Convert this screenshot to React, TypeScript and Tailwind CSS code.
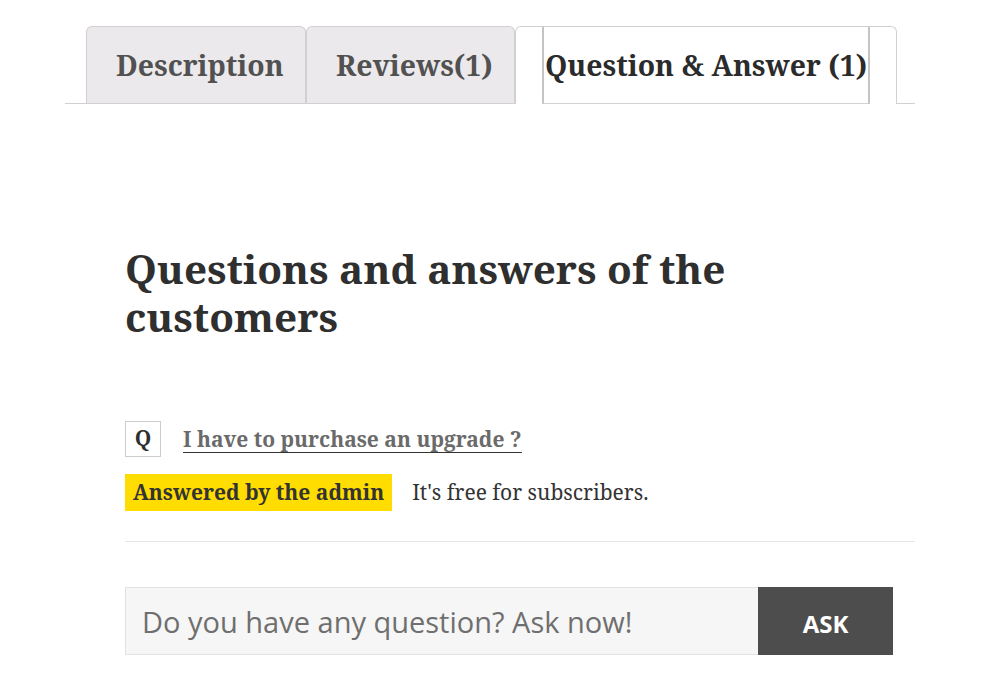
const serif = { fontFamily: '"Noto Serif", "DejaVu Serif", serif' };

const tabs = [
  { label: "Description", active: false, w: "w-[220px]" },
  { label: "Reviews(1)", active: false, w: "w-[209px]" },
  { label: "Question & Answer (1)", active: true, w: "w-[382px]" },
];

export default function App() {
  return (
    <div className="w-[997px] h-[678px] bg-white overflow-hidden" style={serif}>
      <div className="ml-[65px] w-[850px]">
        {/* tabs */}
        <ul className="flex pl-[21px] pt-[26px] border-b border-[#d3ced2]">
          {tabs.map((t) =>
            t.active ? (
              <li
                key={t.label}
                className={`relative -mb-px flex h-[78px] items-stretch rounded-t-[6px] border border-b-0 border-[#d3ced2] bg-white pl-[26px] ${t.w}`}
              >
                <a className="flex items-center border-x-2 border-b border-[#c4c4c4] border-b-[#d3d3d3] px-[1px] text-[28.4px] font-bold text-[#2b2b2b]">
                  {t.label}
                </a>
              </li>
            ) : (
              <li
                key={t.label}
                className={`flex h-[77px] items-center rounded-t-[6px] border border-b-0 border-[#d3ced2] bg-[#ebe9eb] pl-[29px] text-[28.4px] font-bold text-[#515151] ${t.w}`}
              >
                {t.label}
              </li>
            )
          )}
        </ul>

        {/* content */}
        <div className="pl-[60px] pt-[141px]">
          <h2 className="w-[660px] text-[40.5px] font-bold leading-[48px] text-[#2f2f2f]">
            Questions and answers of the customers
          </h2>

          <div className="mt-[80px] flex items-center">
            <span className="flex h-[36px] w-[36px] items-center justify-center border border-[#cccccc] text-[21px] font-bold text-[#2f2f2f]">
              Q
            </span>
            <a className="ml-[22px] border-b border-[#333] text-[21px] font-bold leading-[26px] text-[#6a6a6a]">
              I have to purchase an upgrade ?
            </a>
          </div>

          <div className="mt-[17px] flex items-center">
            <span className="bg-[#ffdd00] px-[8px] py-[5px] text-[21px] font-bold leading-[27px] text-[#333]">
              Answered by the admin
            </span>
            <span className="ml-[20px] text-[21px] text-[#333]">It's free for subscribers.</span>
          </div>

          <div className="mt-[30px] border-t border-[#e5e5e5]" />

          <form className="mt-[45px] flex" style={{ fontFamily: '"Open Sans", sans-serif' }}>
            <input
              placeholder="Do you have any question? Ask now!"
              className="h-[68px] w-[633px] border border-r-0 border-[#e2e2e2] bg-[#f6f6f6] px-[16px] text-[29px] text-[#333] placeholder:text-[#6f6f6f] outline-none"
            />
            <button
              type="button"
              className="h-[68px] w-[135px] bg-[#4d4d4d] pt-[6px] text-[24px] font-bold text-white"
            >
              ASK
            </button>
          </form>
        </div>
      </div>
    </div>
  );
}
